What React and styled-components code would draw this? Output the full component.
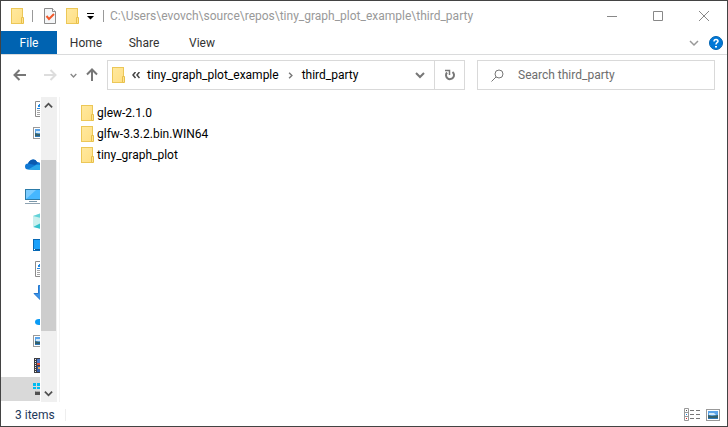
import React from "react";
import styled, { createGlobalStyle } from "styled-components";

const GlobalStyle = createGlobalStyle`
  *, *::before, *::after { box-sizing: border-box; }
  body { margin: 0; background: #fff; }
  button, input { font: inherit; color: inherit; }
  svg { display: block; flex: none; }
`;

const Window = styled.div`
  display: flex;
  flex-direction: column;
  height: 100vh;
  border: 1px solid #434343;
  background: #fff;
  color: #000;
  font: 12px/16px Roboto, "Open Sans", sans-serif;
  overflow: hidden;
`;

const TitleBar = styled.header`
  display: flex;
  align-items: center;
  flex: none;
  height: 30px;
  padding-left: 8px;
`;

const PlainButton = styled.button`
  display: flex;
  align-items: center;
  justify-content: center;
  flex: none;
  width: ${(p) => p.$width}px;
  height: ${(p) => p.$height || 24}px;
  padding: 0;
  border: 0;
  background: transparent;
`;

const Divider = styled.span`
  flex: none;
  width: 1px;
  height: 12px;
  margin: 0 ${(p) => p.$gap}px;
  background: #999;
`;

const Title = styled.h1`
  flex: 1;
  min-width: 0;
  margin: 0;
  font-size: 12px;
  line-height: 16px;
  font-weight: 400;
  color: #999;
  white-space: nowrap;
  overflow: hidden;
`;

const Ribbon = styled.nav`
  display: flex;
  flex: none;
  height: 24px;
  border-bottom: 1px solid #dadbdc;
`;

const Tab = styled.button`
  width: ${(p) => p.$width}px;
  padding: 0;
  border: 0;
  background: ${(p) => (p.$primary ? "#0063b1" : "transparent")};
  color: ${(p) => (p.$primary ? "#fff" : "#333")};
`;

const RibbonEnd = styled.div`
  display: flex;
  align-items: center;
  gap: 5px;
  margin-left: auto;
  padding-right: 4px;
`;

const NavBar = styled.div`
  display: flex;
  align-items: center;
  flex: none;
  height: 42px;
  padding: 0 12px 2px 8px;
`;

const Address = styled.div`
  display: flex;
  align-items: center;
  flex: 1;
  min-width: 0;
  height: 30px;
  margin-right: 12px;
  padding-left: 4px;
  border: 1px solid #d9d9d9;
`;

const Crumb = styled.a`
  color: #000;
  text-decoration: none;
  white-space: nowrap;
`;

const CrumbSep = styled.span`
  display: flex;
  justify-content: center;
  flex: none;
  width: ${(p) => p.$width}px;
`;

const AddressEnd = styled.div`
  display: flex;
  align-items: center;
  align-self: stretch;
  margin-left: auto;
`;

const Refresh = styled(PlainButton)`
  border-left: 1px solid #d9d9d9;
`;

const Search = styled.label`
  display: flex;
  align-items: center;
  gap: 14px;
  flex: 0 1 238px;
  min-width: 0;
  height: 30px;
  padding-left: 13px;
  border: 1px solid #d9d9d9;
`;

const SearchInput = styled.input`
  flex: 1;
  min-width: 0;
  padding: 0;
  border: 0;
  outline: 0;
  background: transparent;
  &::placeholder { color: #6d6d6d; opacity: 1; }
`;

const Body = styled.main`
  display: flex;
  flex: 1;
  min-height: 0;
`;

const Tree = styled.ul`
  flex: none;
  width: 39px;
  margin: 0 1px 0 0;
  padding: 0;
  list-style: none;
  overflow: hidden;
`;

const TreeItem = styled.li`
  display: flex;
  align-items: center;
  height: 24px;
  margin-top: ${(p) => (p.$section ? 8 : 0)}px;
  padding-left: ${(p) => (p.$root ? 24 : 32)}px;
  background: ${(p) => (p.$selected ? "#d9d9d9" : "transparent")};
`;

const Scrollbar = styled.div`
  display: flex;
  flex-direction: column;
  flex: none;
  width: 16px;
  margin-right: 2px;
  padding-right: 1px;
  background: #f0f0f0;
`;

const Track = styled.div`
  display: grid;
  grid-template-rows: 46fr 171fr 54fr;
  flex: 1;
`;

const Thumb = styled.div`
  grid-row: 2;
  background: #cdcdcd;
`;

const Files = styled.ul`
  flex: 1;
  min-width: 0;
  margin: 0;
  padding: 5px 0 0 21px;
  border-left: 1px solid #f3f3f3;
  list-style: none;
`;

const FileRow = styled.li`
  display: flex;
  align-items: center;
  gap: 3px;
  height: 21px;
`;

const StatusBar = styled.footer`
  display: flex;
  align-items: center;
  flex: none;
  height: 24px;
  padding: 1px 7px 0 14px;
  color: #1e395b;
`;

const Count = styled.span`
  padding-right: 10px;
  line-height: 12px;
  border-right: 1px solid #eee;
`;

const ViewModes = styled.div`
  display: flex;
  gap: 4px;
  margin-left: auto;
`;

const Folder = () => (
  <svg width="13" height="16" viewBox="0 0 13 16">
    <defs>
      <linearGradient id="folder-face" x2="1" y2="1">
        <stop offset="0" stopColor="#ffe99f" />
        <stop offset="1" stopColor="#ffdf85" />
      </linearGradient>
    </defs>
    <rect x=".5" y=".5" width="11" height="15" fill="url(#folder-face)" stroke="#ecc757" />
    <path d="M10.5 9.500h2v6h-2z" fill="#ffe391" stroke="#e8c04a" />
  </svg>
);

const Chevron = ({ dir = "down", w = 10, color = "#666", stroke = 2 }) => {
  const turn = { down: 0, up: 180, right: -90 }[dir];
  return (
    <svg width={w} height={w} viewBox="0 0 10 10" fill="none" stroke={color} strokeWidth={stroke}>
      <path d="M1 3l4 4 4-4" transform={`rotate(${turn} 5 5)`} />
    </svg>
  );
};

const Arrow = ({ dir, color }) => (
  <svg width="14" height="14" viewBox="0 0 14 14" fill="none" stroke={color} strokeWidth="2">
    <path d="M1.500 7H13M6.500 2l-5 5 5 5" transform={`rotate(${{ left: 0, up: 90, right: 180 }[dir]} 7 7)`} />
  </svg>
);

const PropertiesIcon = () => (
  <svg width="12" height="16" viewBox="0 0 12 16">
    <path d="M.5.5h8l3 3v12H.5z" fill="#f4f6f8" stroke="#8b8b8b" />
    <path d="M8.500.5v3h3" fill="#fff" stroke="#8b8b8b" />
    <path d="M2.500 8l2.500 3 5-5" fill="none" stroke="#f0592b" strokeWidth="2" />
  </svg>
);

const DocumentIcon = () => (
  <svg width="16" height="16" viewBox="0 0 16 16">
    <path d="M2.500.5h8l3 3v12h-11z" fill="#fff" stroke="#8b8b8b" />
    <path d="M4 6h1V4h1V3h3v3z" fill="#1e88e5" />
    <path d="M4 7.500h8" stroke="#1e88e5" />
    <path d="M4 9.500h8M4 11.500h8M4 13.500h8" stroke="#a5a5a5" />
  </svg>
);

const PictureIcon = () => (
  <svg width="14" height="12" viewBox="0 0 14 12">
    <rect x=".5" y=".5" width="13" height="11" fill="#fff" stroke="#999" />
    <path d="M2 2h10v8H2z" fill="#5aa4ea" />
    <path d="M3 4h5l2 2H3z" fill="#d4eaf8" />
    <path d="M2 6l4 1 6-1v3H2z" fill="#35606a" />
    <path d="M2 9h10v1H2z" fill="#2f79ba" />
  </svg>
);

const CloudIcon = () => (
  <svg width="18" height="12" viewBox="0 0 18 12">
    <path d="M3 10.500a3 3 0 0 1 0-6C5 0 10-1 12 3c4 0 6 3 6 5v3z" fill="#0f78d4" />
    <path d="M3 4.500C5 0 10-1 12 3l1 1-3 2z" fill="#0a5ab0" />
    <path d="M3 10.500L11 6c4-1 7 1 7 5z" fill="#2aa8ea" />
  </svg>
);

const ComputerIcon = () => (
  <svg width="18" height="16" viewBox="0 0 18 16">
    <rect x=".5" y=".5" width="17" height="10" fill="#45b7ff" stroke="#2c7ba8" />
    <path d="M1 10L11 1H1z" fill="#7cccff" />
    <path d="M4 12.500h8" stroke="#7b98aa" />
    <path d="M0 14.500h18" stroke="#8fa3b2" />
  </svg>
);

const CubeIcon = () => (
  <svg width="16" height="16" viewBox="0 0 16 16">
    <path d="M0 3l8-3 8 3v10l-8 3-8-3z" fill="#c9f0ee" />
    <path d="M0 3l8-3 8 3-8 2z" fill="#63d2d8" />
    <path d="M0 14l8-4 8 4-8 2z" fill="#35c2cd" />
  </svg>
);

const DesktopIcon = () => (
  <svg width="16" height="12" viewBox="0 0 16 12">
    <rect x=".5" y=".5" width="15" height="11" fill="#1ba1fb" stroke="#0869b5" />
    <path d="M1 10h14v1H1z" fill="#075b9d" />
    <path d="M1 10h1v1H1z" fill="#fff" />
  </svg>
);

const DownloadIcon = () => (
  <svg width="16" height="16" viewBox="0 0 16 16">
    <path d="M5.500.5h5v8h4.500L8 15.500 1 8.500h4.500z" fill="#3b93e8" stroke="#2377cd" />
  </svg>
);

const MusicIcon = () => (
  <svg width="16" height="16" viewBox="0 0 16 16">
    <path d="M8 0h2c0 4 4 4 4 8-1-2-2-3-4-3v7H8z" fill="#0b9bf5" />
    <ellipse cx="6" cy="13" rx="4" ry="3" fill="#0b9bf5" />
  </svg>
);

const VideoIcon = () => (
  <svg width="16" height="15" viewBox="0 0 16 15">
    <path d="M1 0h14v15H1z" fill="#3e3e42" />
    <path d="M2.500 1v13M13.500 1v13" stroke="#eee" strokeDasharray="1 1" />
    <path d="M4 1h8v6H4z" fill="#4d78c9" />
    <path d="M4 5h8v2H4z" fill="#e34f3c" />
    <path d="M4 8h8v6H4z" fill="#365da8" />
    <path d="M5 9h2v2H5z" fill="#e5a451" />
  </svg>
);

const DriveIcon = () => (
  <svg width="16" height="13" viewBox="0 0 16 13">
    <path d="M0 0h3v3H0zM4 0h3v3H4zM0 4h3v2H0zM4 4h3v2H4z" fill="#00bcf2" />
    <path d="M3 8h11l2 1v3H2V9z" fill="#505050" />
    <path d="M3 8h11v1H3z" fill="#aaa" />
  </svg>
);

const RefreshIcon = () => (
  <svg width="12" height="12" viewBox="0 0 12 12" fill="none" stroke="#777">
    <path d="M8.500 3A4 4 0 1 1 3 3.500" strokeWidth="2" />
    <path d="M1 1.500h4.500V6" strokeWidth="1.500" />
  </svg>
);

const SearchIcon = () => (
  <svg width="13" height="13" viewBox="0 0 13 13" fill="none" stroke="#777">
    <circle cx="8" cy="5" r="4" />
    <path d="M5 8L.5 12.500" />
  </svg>
);

const HelpIcon = () => (
  <svg width="14" height="14" viewBox="0 0 14 14">
    <circle cx="7" cy="7" r="6.500" fill="#0078d7" stroke="#0063b1" />
    <path d="M5 5.500c0-3 4-2.500 4-.3C9 6.500 7 6.500 7 8.500" fill="none" stroke="#fff" strokeWidth="1.500" />
    <path d="M6 10h2v1.500H6z" fill="#fff" />
  </svg>
);

const DetailsIcon = () => (
  <svg width="17" height="13" viewBox="0 0 17 13">
    <path d="M.5.5h4v12h-4zM.5 4.500h4M.5 8.500h4" fill="#fff" stroke="#999" />
    <path d="M2 2h1v1H2z" fill="#555" />
    <path d="M2 6h1v1H2z" fill="#1e88e5" />
    <path d="M2 10h1v1H2z" fill="#e02020" />
    <path d="M6 2.500h4M12 2.500h4M6 6.500h4M12 6.500h4M6 10.500h4M12 10.500h4" stroke="#777" />
  </svg>
);

const TREE = [
  { name: "Documents shortcut", Icon: DocumentIcon },
  { name: "Pictures shortcut", Icon: PictureIcon },
  { name: "OneDrive", Icon: CloudIcon, root: true, section: true },
  { name: "This PC", Icon: ComputerIcon, root: true, section: true },
  { name: "3D Objects", Icon: CubeIcon },
  { name: "Desktop", Icon: DesktopIcon },
  { name: "Documents", Icon: DocumentIcon },
  { name: "Downloads", Icon: DownloadIcon },
  { name: "Music", Icon: MusicIcon },
  { name: "Pictures", Icon: PictureIcon },
  { name: "Videos", Icon: VideoIcon },
  { name: "Local Disk", Icon: DriveIcon, selected: true },
];

const FILES = ["glew-2.1.0", "glfw-3.3.2.bin.WIN64", "tiny_graph_plot"];

export default function App() {
  return (
    <Window>
      <GlobalStyle />
      <TitleBar>
        <PlainButton $width={17} aria-label="Folder menu"><Folder /></PlainButton>
        <Divider $gap={6} />
        <PlainButton $width={22} aria-label="Properties"><PropertiesIcon /></PlainButton>
        <PlainButton $width={22} aria-label="New folder"><Folder /></PlainButton>
        <PlainButton $width={14} aria-label="Customize Quick Access Toolbar">
          <svg width="7" height="7" viewBox="0 0 7 7"><path d="M0 0h7v1H0zM0 3h7L3.500 6.500z" /></svg>
        </PlainButton>
        <Divider $gap={6} />
        <Title>C:\Users\evovch\source\repos\tiny_graph_plot_example\third_party</Title>
        <PlainButton $width={46} $height={28} aria-label="Minimize">
          <svg width="10" height="10" viewBox="0 0 10 10"><path d="M0 5.500h10" stroke="#888" /></svg>
        </PlainButton>
        <PlainButton $width={46} $height={28} aria-label="Maximize">
          <svg width="10" height="10" viewBox="0 0 10 10"><path d="M.5.5h9v9h-9z" fill="none" stroke="#888" /></svg>
        </PlainButton>
        <PlainButton $width={46} $height={28} aria-label="Close">
          <svg width="10" height="10" viewBox="0 0 10 10"><path d="M0 0l10 10M10 0L0 10" stroke="#888" /></svg>
        </PlainButton>
      </TitleBar>

      <Ribbon>
        <Tab $width={56} $primary>File</Tab>
        <Tab $width={58}>Home</Tab>
        <Tab $width={58}>Share</Tab>
        <Tab $width={58}>View</Tab>
        <RibbonEnd>
          <PlainButton $width={20} $height={20} aria-label="Expand the Ribbon"><Chevron color="#999" stroke={1.5} /></PlainButton>
          <PlainButton $width={14} $height={20} aria-label="Help"><HelpIcon /></PlainButton>
        </RibbonEnd>
      </Ribbon>

      <NavBar>
        <PlainButton $width={22} aria-label="Back"><Arrow dir="left" color="#777" /></PlainButton>
        <PlainButton $width={38} aria-label="Forward"><Arrow dir="right" color="#ddd" /></PlainButton>
        <PlainButton $width={8} aria-label="Recent locations"><Chevron w={7} color="#888" /></PlainButton>
        <PlainButton $width={30} aria-label="Up"><Arrow dir="up" color="#777" /></PlainButton>
        <Address>
          <Folder />
          <CrumbSep $width={22}>
            <svg width="8" height="7" viewBox="0 0 8 7" fill="none" stroke="#444" strokeWidth="1.500"><path d="M3.500 0L1 3l2.500 3M7.500 0L5 3l2.500 3" /></svg>
          </CrumbSep>
          <Crumb href="#tiny_graph_plot_example">tiny_graph_plot_example</Crumb>
          <CrumbSep $width={23}><Chevron dir="right" w={7} color="#777" /></CrumbSep>
          <Crumb href="#third_party">third_party</Crumb>
          <AddressEnd>
            <PlainButton $width={28} aria-label="Previous locations"><Chevron color="#777" /></PlainButton>
            <Refresh $width={30} $height={28} aria-label="Refresh"><RefreshIcon /></Refresh>
          </AddressEnd>
        </Address>
        <Search>
          <SearchIcon />
          <SearchInput type="search" aria-label="Search third_party" placeholder="Search third_party" />
        </Search>
      </NavBar>

      <Body>
        <Tree>
          {TREE.map(({ name, Icon, root, section, selected }) => (
            <TreeItem key={name} aria-label={name} $root={root} $section={section} $selected={selected}>
              <Icon />
            </TreeItem>
          ))}
        </Tree>
        <Scrollbar>
          <PlainButton $width={15} $height={17} aria-label="Scroll up"><Chevron dir="up" w={9} color="#505050" /></PlainButton>
          <Track><Thumb /></Track>
          <PlainButton $width={15} $height={17} aria-label="Scroll down"><Chevron w={9} color="#505050" /></PlainButton>
        </Scrollbar>
        <Files>
          {FILES.map((name) => (
            <FileRow key={name}><Folder />{name}</FileRow>
          ))}
        </Files>
      </Body>

      <StatusBar>
        <Count>3 items</Count>
        <ViewModes>
          <PlainButton $width={20} $height={16} aria-label="Details view"><DetailsIcon /></PlainButton>
          <PlainButton $width={14} $height={16} aria-label="Large icons view"><PictureIcon /></PlainButton>
        </ViewModes>
      </StatusBar>
    </Window>
  );
}
